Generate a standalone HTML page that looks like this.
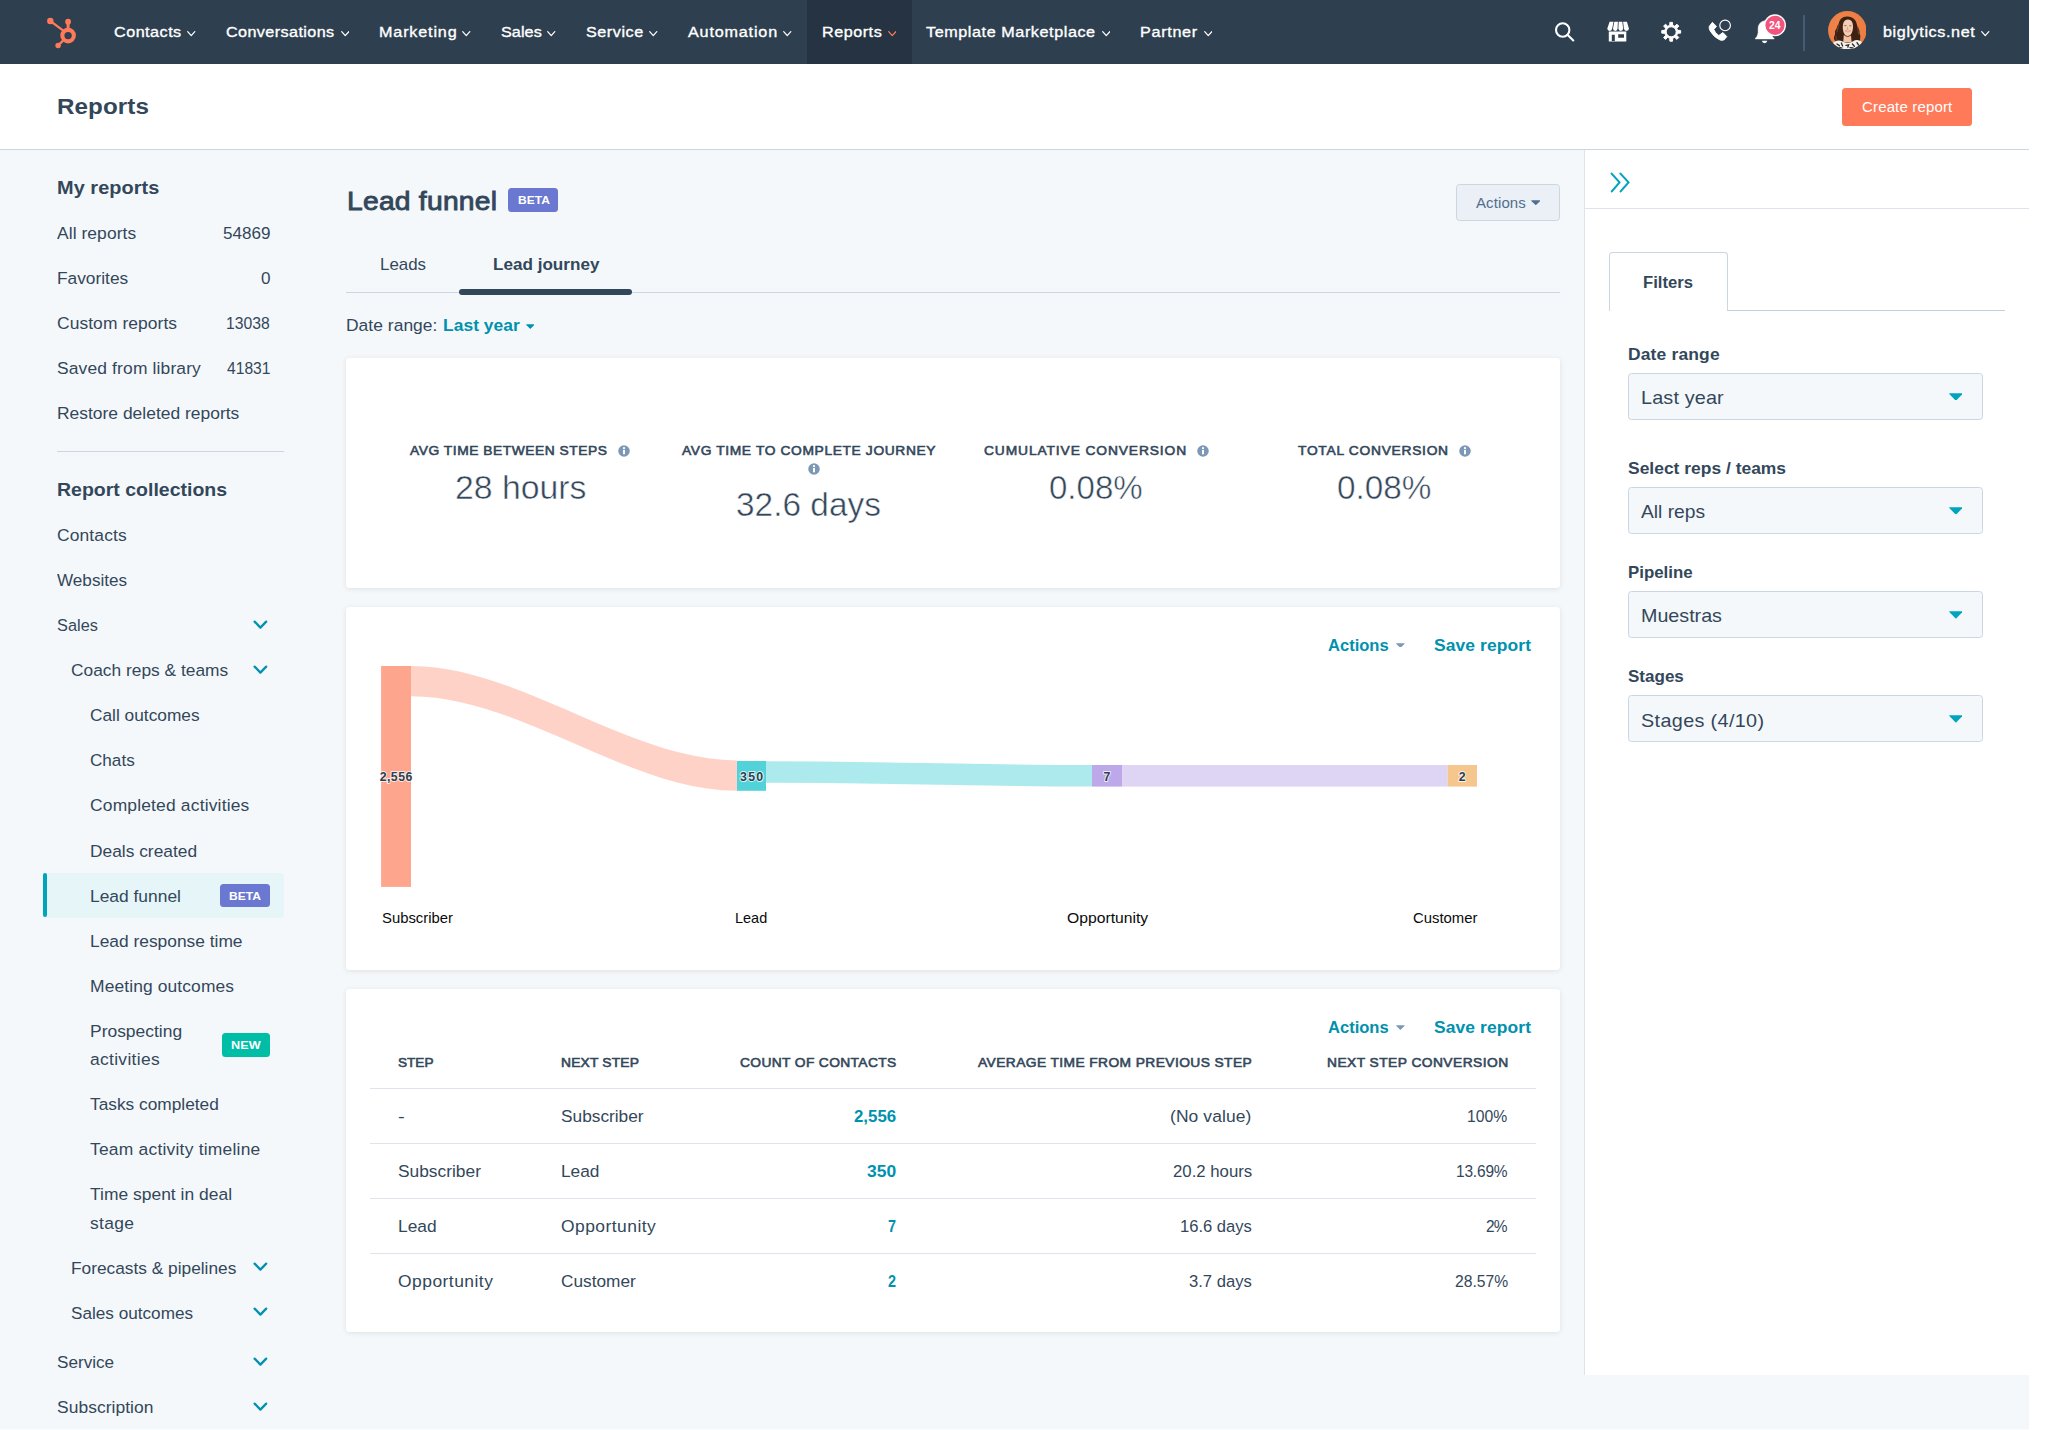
<!DOCTYPE html>
<html lang="en">
<head>
<meta charset="utf-8">
<title>Reports | Lead funnel</title>
<style>
html,body{margin:0;padding:0;background:#fff}
body{width:2048px;height:1430px;overflow:hidden;position:relative;font-family:"Liberation Sans",sans-serif;color:#33475b}
#app{position:absolute;left:0;top:0;width:2029px;height:1430px;background:#f5f8fa;overflow:hidden}
.b{position:absolute;display:block}
.t{position:absolute;display:block;white-space:pre;line-height:1;font-weight:400;transform-origin:0 0}
nav .t,nav .b{}
</style>
</head>
<body>
<div id="app">
<nav class="b" style="left:0;top:0;width:2029px;height:64px;background:#2e3f50">
<div class="b" style="left:807.00px;top:0.00px;width:105.00px;height:64.00px;background:#253342;"></div>
<svg class="b" style="left:46px;top:17px" width="34" height="33" viewBox="0 0 34 33"><g fill="none" stroke="#ff7a59" stroke-linecap="round"><path d="M4.3 4.0 L17.6 13.8" stroke-width="2.2"/><path d="M22.1 4.8 V11.5" stroke-width="3"/><path d="M12.1 28.4 L17.6 23.2" stroke-width="2.4"/><circle cx="22.1" cy="18.6" r="5.75" stroke-width="4.1"/></g><g fill="#ff7a59"><circle cx="4.3" cy="4.0" r="3.2"/><circle cx="22.1" cy="4.7" r="2.9"/><circle cx="12.1" cy="28.4" r="2.75"/></g></svg>
<span class="t" style="left:113.60px;top:23px;font-size:15.10px;line-height:17px;letter-spacing:0.462px;transform:scaleX(1.0700);color:#fff;-webkit-text-stroke:0.35px currentColor;">Contacts</span>
<svg class="b" style="left:187.00px;top:31.20px" width="8.50" height="5.40" viewBox="0 0 8.50 5.40"><path d="M0.7 0.7 L4.25 4.60 L7.80 0.7" fill="none" stroke="#fff" stroke-width="1.25" stroke-linecap="round" stroke-linejoin="round"/></svg>
<span class="t" style="left:225.60px;top:23px;font-size:15.10px;line-height:17px;letter-spacing:0.386px;transform:scaleX(1.0700);color:#fff;-webkit-text-stroke:0.35px currentColor;">Conversations</span>
<svg class="b" style="left:340.50px;top:31.20px" width="8.50" height="5.40" viewBox="0 0 8.50 5.40"><path d="M0.7 0.7 L4.25 4.60 L7.80 0.7" fill="none" stroke="#fff" stroke-width="1.25" stroke-linecap="round" stroke-linejoin="round"/></svg>
<span class="t" style="left:378.60px;top:23px;font-size:15.10px;line-height:17px;letter-spacing:0.791px;transform:scaleX(1.0700);color:#fff;-webkit-text-stroke:0.35px currentColor;">Marketing</span>
<svg class="b" style="left:462.30px;top:31.20px" width="8.50" height="5.40" viewBox="0 0 8.50 5.40"><path d="M0.7 0.7 L4.25 4.60 L7.80 0.7" fill="none" stroke="#fff" stroke-width="1.25" stroke-linecap="round" stroke-linejoin="round"/></svg>
<span class="t" style="left:500.60px;top:23px;font-size:15.10px;line-height:17px;letter-spacing:0.072px;transform:scaleX(1.0700);color:#fff;-webkit-text-stroke:0.35px currentColor;">Sales</span>
<svg class="b" style="left:547.30px;top:31.20px" width="8.50" height="5.40" viewBox="0 0 8.50 5.40"><path d="M0.7 0.7 L4.25 4.60 L7.80 0.7" fill="none" stroke="#fff" stroke-width="1.25" stroke-linecap="round" stroke-linejoin="round"/></svg>
<span class="t" style="left:585.60px;top:23px;font-size:15.10px;line-height:17px;letter-spacing:0.517px;transform:scaleX(1.0700);color:#fff;-webkit-text-stroke:0.35px currentColor;">Service</span>
<svg class="b" style="left:649.00px;top:31.20px" width="8.50" height="5.40" viewBox="0 0 8.50 5.40"><path d="M0.7 0.7 L4.25 4.60 L7.80 0.7" fill="none" stroke="#fff" stroke-width="1.25" stroke-linecap="round" stroke-linejoin="round"/></svg>
<span class="t" style="left:687.60px;top:23px;font-size:15.10px;line-height:17px;letter-spacing:0.773px;transform:scaleX(1.0700);color:#fff;-webkit-text-stroke:0.35px currentColor;">Automation</span>
<svg class="b" style="left:783.00px;top:31.20px" width="8.50" height="5.40" viewBox="0 0 8.50 5.40"><path d="M0.7 0.7 L4.25 4.60 L7.80 0.7" fill="none" stroke="#fff" stroke-width="1.25" stroke-linecap="round" stroke-linejoin="round"/></svg>
<span class="t" style="left:821.60px;top:23px;font-size:15.10px;line-height:17px;letter-spacing:0.491px;transform:scaleX(1.0700);color:#fff;-webkit-text-stroke:0.35px currentColor;">Reports</span>
<svg class="b" style="left:887.50px;top:31.20px" width="8.50" height="5.40" viewBox="0 0 8.50 5.40"><path d="M0.7 0.7 L4.25 4.60 L7.80 0.7" fill="none" stroke="#ff7a59" stroke-width="1.25" stroke-linecap="round" stroke-linejoin="round"/></svg>
<span class="t" style="left:925.60px;top:23px;font-size:15.10px;line-height:17px;letter-spacing:0.546px;transform:scaleX(1.0700);color:#fff;-webkit-text-stroke:0.35px currentColor;">Template Marketplace</span>
<svg class="b" style="left:1101.50px;top:31.20px" width="8.50" height="5.40" viewBox="0 0 8.50 5.40"><path d="M0.7 0.7 L4.25 4.60 L7.80 0.7" fill="none" stroke="#fff" stroke-width="1.25" stroke-linecap="round" stroke-linejoin="round"/></svg>
<span class="t" style="left:1139.60px;top:23px;font-size:15.10px;line-height:17px;letter-spacing:0.655px;transform:scaleX(1.0700);color:#fff;-webkit-text-stroke:0.35px currentColor;">Partner</span>
<svg class="b" style="left:1203.50px;top:31.20px" width="8.50" height="5.40" viewBox="0 0 8.50 5.40"><path d="M0.7 0.7 L4.25 4.60 L7.80 0.7" fill="none" stroke="#fff" stroke-width="1.25" stroke-linecap="round" stroke-linejoin="round"/></svg>
<svg class="b" style="left:1553px;top:20px" width="24" height="24" viewBox="0 0 24 24"><g fill="none" stroke="#fff" stroke-width="2.1" stroke-linecap="round"><circle cx="9.7" cy="10" r="6.7"/><path d="M14.7 15 L20.3 20.4"/></g></svg>
<svg class="b" style="left:1606px;top:21px" width="25" height="22" viewBox="0 0 25 22"><g fill="#fff"><path d="M3.6 0.7 H7.5 L6.2 7.6 Q6.0 9.9 3.8 9.9 Q1.3 9.8 1.3 7.6 Z"/><path d="M8.3 0.7 H11.9 L11.6 7.6 Q11.5 9.9 9.3 9.9 Q7.0 9.8 7.0 7.6 Z"/><path d="M12.7 0.7 H16.3 L17.1 7.6 Q17.1 9.9 14.8 9.9 Q12.5 9.8 12.4 7.6 Z"/><path d="M17.1 0.7 H20.9 L22.9 7.6 Q22.9 9.9 20.4 9.9 Q18.2 9.8 17.9 7.6 Z"/><path d="M2.8 10.4 H20.3 V20.6 H2.8 Z M5.8 13.7 V19.9 H8.8 V13.7 Z M12.2 13.3 V16.8 H18.0 V13.3 Z" fill-rule="evenodd"/></g></svg>
<svg class="b" style="left:1659px;top:20px" width="24" height="24" viewBox="0 0 24 24"><path d="M10.76 5.36 L10.87 2.39 L13.53 2.39 L13.64 5.36 L15.74 6.23 L17.91 4.21 L19.79 6.09 L17.77 8.26 L18.64 10.36 L21.61 10.47 L21.61 13.13 L18.64 13.24 L17.77 15.34 L19.79 17.51 L17.91 19.39 L15.74 17.37 L13.64 18.24 L13.53 21.21 L10.87 21.21 L10.76 18.24 L8.66 17.37 L6.49 19.39 L4.61 17.51 L6.63 15.34 L5.76 13.24 L2.79 13.13 L2.79 10.47 L5.76 10.36 L6.63 8.26 L4.61 6.09 L6.49 4.21 L8.66 6.23 Z M7.20 11.80 a5.00 5.00 0 1 0 10.00 0 a5.00 5.00 0 1 0 -10.00 0 Z" fill="#fff" fill-rule="evenodd" stroke="#fff" stroke-width="1" stroke-linejoin="round"/></svg>
<svg class="b" style="left:1707px;top:18px" width="26" height="25" viewBox="0 0 26 25"><path d="M5.4 4.3 L9.5 8.4 L6.8 11.5 Q8.1 15 11.8 17.5 L15.9 14.5 L19.8 18.6 L17.3 21.7 Q15.4 22.8 13.2 22.1 Q7 19.4 3.1 12.9 Q1.6 10 2.3 8.3 Z" fill="#fff" stroke="#fff" stroke-width="0.9" stroke-linejoin="round"/><circle cx="18.1" cy="7.4" r="5.3" fill="#2e3f50" stroke="#fff" stroke-width="1.15"/></svg>
<svg class="b" style="left:1753px;top:12px" width="36" height="34" viewBox="0 0 36 34"><path d="M2.1 26.9 Q4.8 24.2 5.1 21 V16.6 Q5.3 10 11.7 8.7 Q18.1 10 18.3 16.6 V21 Q18.6 24.2 21.3 26.9 Z" fill="#fff" stroke="#fff" stroke-width=".5" stroke-linejoin="round"/><path d="M8.9 28.8 H14.3 Q13.8 31.2 11.6 31.2 Q9.4 31.2 8.9 28.8 Z" fill="#fff"/><circle cx="22.0" cy="13.3" r="11.0" fill="#fff"/><circle cx="22.0" cy="13.3" r="9.6" fill="#f2547d"/></svg>
<span class="t" style="left:1768.60px;top:19px;font-size:10.70px;line-height:12px;transform:scaleX(0.9598);font-weight:700;color:#fff;">24</span>
<div class="b" style="left:1803.00px;top:15.00px;width:2.00px;height:36.00px;background:#425b76;"></div>
<svg class="b" style="left:1827.8px;top:10.5px" width="38.6" height="38.6" viewBox="0 0 38.6 38.6"><defs><clipPath id="av"><circle cx="19.3" cy="19.3" r="19.2"/></clipPath><radialGradient id="avg" cx=".4" cy=".45" r=".7"><stop offset="0" stop-color="#f08850"/><stop offset="1" stop-color="#ec7a3e"/></radialGradient></defs><g clip-path="url(#av)"><rect width="38.6" height="38.6" fill="url(#avg)"/><path d="M19.6 5.6 C14.2 5.4 11.6 8.6 10.8 12.4 C8.8 14.6 9.2 17.0 8.0 18.6 C5.8 20.6 8.0 22.8 6.6 24.6 C5.0 27.4 6.4 30.0 9.0 31.2 L17 33 L27.5 33.5 C30.6 33.2 32.8 30.6 32.0 27.6 C33.4 25.0 31.0 23.2 31.6 20.6 C31.4 17.8 29.4 16.6 29.0 14.0 C28.4 9.2 25.0 5.8 19.6 5.6 Z" fill="#3f2114"/><path d="M11.2 13 C9.4 16 10.4 19 8.6 21.4 M29.6 16 C30.6 19 29.6 21 31 23.4 M8.2 25 C7.4 27.6 9 29.4 10.6 30.4" stroke="#70422a" stroke-width="1.1" fill="none"/><path d="M15.8 24 H23.0 L23.6 31.5 H15.2 Z" fill="#f1c3a4"/><path d="M19.9 8.6 C23.4 8.6 25.2 11.6 25.0 16.2 C24.8 20.8 22.8 25.4 19.8 25.4 C16.8 25.4 14.8 20.8 14.8 16.2 C14.8 11.4 16.6 8.6 19.9 8.6 Z" fill="#f6cdb0"/><path d="M16.2 24.2 Q19.8 27.0 23.2 24.2" stroke="#5a3220" stroke-width=".9" fill="none"/><path d="M17.0 19.6 Q19.8 22.6 22.8 19.8 Q19.8 20.8 17.0 19.6 Z" fill="#fff" stroke="#c9756a" stroke-width=".5"/><path d="M16.4 14.6 h2 M21.4 14.8 h2" stroke="#6a5a56" stroke-width=".9"/><path d="M19.6 16 L19.2 18.4 L20.4 18.4" stroke="#c98e72" stroke-width=".6" fill="none"/><path d="M4 38.6 L5.4 31.4 Q9.6 28.4 14.6 30.4 Q19.6 33.4 24.6 30.4 Q29.6 27.6 33.4 30.6 L35.6 38.6 Z" fill="#f4f1ec"/><path d="M9 33 l2.4 1.6 M13.4 32 l1.2 3 M18 34.4 l2.6 -.6 l-.8 2.4 M24.4 33 l2 2.2 M29 31.6 l1.6 2.6 M11 36.4 l3 .8 M22 36.6 l3 .4 M30.4 35.8 l1.6 1.2" stroke="#2a2a2a" stroke-width="1.3" fill="none" stroke-linecap="round"/></g></svg>
<span class="t" style="left:1883.10px;top:23px;font-size:15.10px;line-height:17px;letter-spacing:0.575px;transform:scaleX(1.0700);color:#fff;-webkit-text-stroke:0.35px currentColor;">biglytics.net</span>
<svg class="b" style="left:1981.20px;top:31.20px" width="8.50" height="5.40" viewBox="0 0 8.50 5.40"><path d="M0.7 0.7 L4.25 4.60 L7.80 0.7" fill="none" stroke="#fff" stroke-width="1.25" stroke-linecap="round" stroke-linejoin="round"/></svg>
</nav>
<header class="b" style="left:0;top:64px;width:2029px;height:85px;background:#fff;border-bottom:1px solid #cbd6e2">
</header>
<span class="t" style="left:57.30px;top:94px;font-size:22.60px;line-height:25px;letter-spacing:0.092px;transform:scaleX(1.0700);font-weight:700;">Reports</span>
<div class="b" style="left:1842.00px;top:88.00px;width:130.00px;height:37.60px;background:#ff7a59;border-radius:3.5px"></div>
<span class="t" style="left:1862.10px;top:99px;font-size:14.00px;line-height:16px;letter-spacing:0.153px;transform:scaleX(1.0700);color:#fff;">Create report</span>
<aside>
<span class="t" style="left:57.10px;top:177px;font-size:18.60px;line-height:21px;letter-spacing:0.052px;transform:scaleX(1.0700);font-weight:700;">My reports</span>
<span class="t" style="left:57.10px;top:224px;font-size:16.30px;line-height:18px;letter-spacing:0.067px;transform:scaleX(1.0700);">All reports</span>
<span class="t" style="left:222.50px;top:224px;font-size:16.30px;line-height:18px;transform:scaleX(1.0482);">54869</span>
<span class="t" style="left:57.10px;top:269px;font-size:16.30px;line-height:18px;transform:scaleX(1.0628);">Favorites</span>
<span class="t" style="left:260.50px;top:269px;font-size:16.30px;line-height:18px;transform:scaleX(1.0501);">0</span>
<span class="t" style="left:57.10px;top:314px;font-size:16.30px;line-height:18px;letter-spacing:0.071px;transform:scaleX(1.0700);">Custom reports</span>
<span class="t" style="left:226.30px;top:314px;font-size:16.30px;line-height:18px;transform:scaleX(0.9644);">13038</span>
<span class="t" style="left:57.10px;top:359px;font-size:16.30px;line-height:18px;letter-spacing:0.136px;transform:scaleX(1.0700);">Saved from library</span>
<span class="t" style="left:226.50px;top:359px;font-size:16.30px;line-height:18px;transform:scaleX(0.9600);">41831</span>
<span class="t" style="left:57.10px;top:404px;font-size:16.30px;line-height:18px;letter-spacing:0.010px;transform:scaleX(1.0700);">Restore deleted reports</span>
<div class="b" style="left:57.00px;top:451.00px;width:226.70px;height:1.00px;background:#cbd6e2;"></div>
<span class="t" style="left:57.10px;top:479px;font-size:18.60px;line-height:21px;transform:scaleX(1.0488);font-weight:700;">Report collections</span>
<span class="t" style="left:57.10px;top:526px;font-size:16.30px;line-height:18px;letter-spacing:0.120px;transform:scaleX(1.0700);">Contacts</span>
<span class="t" style="left:57.10px;top:571px;font-size:16.30px;line-height:18px;transform:scaleX(1.0517);">Websites</span>
<span class="t" style="left:57.10px;top:616px;font-size:16.30px;line-height:18px;">Sales</span>
<svg class="b" style="left:252.9px;top:619.90px" width="16" height="10" viewBox="0 0 16 10"><path d="M1.6 1.6 L7.4 7.6 L13.2 1.6" fill="none" stroke="#0091ae" stroke-width="2.25" stroke-linecap="round" stroke-linejoin="round"/></svg>
<span class="t" style="left:70.90px;top:661px;font-size:16.30px;line-height:18px;transform:scaleX(1.0658);">Coach reps &amp; teams</span>
<svg class="b" style="left:252.9px;top:664.90px" width="16" height="10" viewBox="0 0 16 10"><path d="M1.6 1.6 L7.4 7.6 L13.2 1.6" fill="none" stroke="#0091ae" stroke-width="2.25" stroke-linecap="round" stroke-linejoin="round"/></svg>
<span class="t" style="left:90.10px;top:706px;font-size:16.30px;line-height:18px;transform:scaleX(1.0624);">Call outcomes</span>
<span class="t" style="left:90.10px;top:751px;font-size:16.30px;line-height:18px;transform:scaleX(1.0507);">Chats</span>
<span class="t" style="left:90.10px;top:796px;font-size:16.30px;line-height:18px;letter-spacing:0.167px;transform:scaleX(1.0700);">Completed activities</span>
<span class="t" style="left:90.10px;top:842px;font-size:16.30px;line-height:18px;transform:scaleX(1.0659);">Deals created</span>
<div class="b" style="left:42.50px;top:872.50px;width:241.20px;height:45.00px;background:#e5f5f8;border-radius:3.5px"></div>
<div class="b" style="left:42.60px;top:872.60px;width:4.50px;height:44.90px;background:#00a4bd;border-radius:2.3px"></div>
<span class="t" style="left:90.10px;top:887px;font-size:16.30px;line-height:18px;transform:scaleX(1.0685);">Lead funnel</span>
<div class="b" style="left:219.50px;top:884.00px;width:50.00px;height:22.80px;background:#6a78d1;border-radius:3.5px"></div>
<span class="t" style="left:228.60px;top:889px;font-size:11.80px;line-height:14px;transform:scaleX(1.0201);font-weight:700;color:#fff;">BETA</span>
<span class="t" style="left:90.10px;top:932px;font-size:16.30px;line-height:18px;transform:scaleX(1.0664);">Lead response time</span>
<span class="t" style="left:90.10px;top:977px;font-size:16.30px;line-height:18px;letter-spacing:0.106px;transform:scaleX(1.0700);">Meeting outcomes</span>
<span>
<span class="t" style="left:90.10px;top:1022px;font-size:16.30px;line-height:18px;letter-spacing:0.010px;transform:scaleX(1.0700);">Prospecting</span>
<span class="t" style="left:90.10px;top:1050px;font-size:16.30px;line-height:18px;letter-spacing:0.292px;transform:scaleX(1.0700);">activities</span>
</span>
<span class="t" style="left:90.10px;top:1095px;font-size:16.30px;line-height:18px;transform:scaleX(1.0623);">Tasks completed</span>
<span class="t" style="left:90.10px;top:1140px;font-size:16.30px;line-height:18px;letter-spacing:0.210px;transform:scaleX(1.0700);">Team activity timeline</span>
<span>
<span class="t" style="left:90.10px;top:1185px;font-size:16.30px;line-height:18px;letter-spacing:0.017px;transform:scaleX(1.0700);">Time spent in deal</span>
<span class="t" style="left:90.10px;top:1214px;font-size:16.30px;line-height:18px;letter-spacing:0.317px;transform:scaleX(1.0700);">stage</span>
</span>
<span class="t" style="left:71.10px;top:1259px;font-size:16.30px;line-height:18px;transform:scaleX(1.0621);">Forecasts &amp; pipelines</span>
<svg class="b" style="left:252.9px;top:1262.20px" width="16" height="10" viewBox="0 0 16 10"><path d="M1.6 1.6 L7.4 7.6 L13.2 1.6" fill="none" stroke="#0091ae" stroke-width="2.25" stroke-linecap="round" stroke-linejoin="round"/></svg>
<span class="t" style="left:71.10px;top:1304px;font-size:16.30px;line-height:18px;transform:scaleX(1.0537);">Sales outcomes</span>
<svg class="b" style="left:252.9px;top:1307.30px" width="16" height="10" viewBox="0 0 16 10"><path d="M1.6 1.6 L7.4 7.6 L13.2 1.6" fill="none" stroke="#0091ae" stroke-width="2.25" stroke-linecap="round" stroke-linejoin="round"/></svg>
<span class="t" style="left:57.10px;top:1353px;font-size:16.30px;line-height:18px;transform:scaleX(1.0522);">Service</span>
<svg class="b" style="left:252.9px;top:1356.80px" width="16" height="10" viewBox="0 0 16 10"><path d="M1.6 1.6 L7.4 7.6 L13.2 1.6" fill="none" stroke="#0091ae" stroke-width="2.25" stroke-linecap="round" stroke-linejoin="round"/></svg>
<span class="t" style="left:57.10px;top:1398px;font-size:16.30px;line-height:18px;letter-spacing:0.041px;transform:scaleX(1.0700);">Subscription</span>
<svg class="b" style="left:252.9px;top:1401.80px" width="16" height="10" viewBox="0 0 16 10"><path d="M1.6 1.6 L7.4 7.6 L13.2 1.6" fill="none" stroke="#0091ae" stroke-width="2.25" stroke-linecap="round" stroke-linejoin="round"/></svg>
<div class="b" style="left:221.80px;top:1033.00px;width:48.40px;height:23.50px;background:#00bda5;border-radius:3.5px"></div>
<span class="t" style="left:230.90px;top:1038px;font-size:11.80px;line-height:14px;letter-spacing:0.055px;transform:scaleX(1.0700);font-weight:700;color:#fff;">NEW</span>
<div class="b" style="left:0.00px;top:1429.00px;width:2029.00px;height:1.00px;background:#fafcfd;"></div>
</aside>
<main>
<span class="t" style="left:346.60px;top:186px;font-size:26.40px;line-height:30px;letter-spacing:0.225px;transform:scaleX(1.0700);-webkit-text-stroke:0.9px currentColor;">Lead funnel</span>
<div class="b" style="left:508.20px;top:188.00px;width:50.20px;height:23.80px;background:#6a78d1;border-radius:3.5px"></div>
<span class="t" style="left:517.50px;top:193px;font-size:11.80px;line-height:14px;transform:scaleX(1.0201);font-weight:700;color:#fff;">BETA</span>
<div class="b" style="left:1456.00px;top:184.00px;width:104.00px;height:37.00px;background:#eaf0f6;border:1px solid #cbd6e2;border-radius:3.5px;box-sizing:border-box"></div>
<span class="t" style="left:1476.10px;top:195px;font-size:14.00px;line-height:16px;letter-spacing:0.104px;transform:scaleX(1.0700);color:#506e91;">Actions</span>
<svg class="b" style="left:1530.80px;top:200.40px" width="9.60" height="5.00" viewBox="0 0 9.60 5.00"><path d="M0.6 0.3 H9.00 Q9.60 0.3 9.30 1 L5.30 4.70 Q4.80 5.20 4.30 4.70 L0.3 1 Q0 0.3 0.6 0.3 Z" fill="#506e91"/></svg>
<div class="b" style="left:346.00px;top:292.00px;width:1214.00px;height:1.00px;background:#cbd6e2;"></div>
<span class="t" style="left:379.60px;top:255px;font-size:16.60px;line-height:19px;transform:scaleX(1.0169);">Leads</span>
<span class="t" style="left:492.60px;top:255px;font-size:16.60px;line-height:19px;transform:scaleX(1.0306);font-weight:700;">Lead journey</span>
<div class="b" style="left:458.80px;top:289.00px;width:173.20px;height:6.00px;background:#33475b;border-radius:3px"></div>
<span class="t" style="left:346.30px;top:316px;font-size:16.30px;line-height:18px;letter-spacing:0.035px;transform:scaleX(1.0700);">Date range:</span>
<span class="t" style="left:442.90px;top:316px;font-size:16.30px;line-height:18px;letter-spacing:0.039px;transform:scaleX(1.0700);font-weight:700;color:#0091ae;">Last year</span>
<svg class="b" style="left:525.80px;top:324.30px" width="8.60" height="4.70" viewBox="0 0 8.60 4.70"><path d="M0.6 0.3 H8.00 Q8.60 0.3 8.30 1 L4.80 4.40 Q4.30 4.90 3.80 4.40 L0.3 1 Q0 0.3 0.6 0.3 Z" fill="#0091ae"/></svg>
<div class="b" style="left:346.00px;top:357.50px;width:1213.50px;height:230.00px;background:#fff;border-radius:3.5px;box-shadow:0 1px 5px rgba(45,62,80,.12)"></div>
<span class="t" style="left:410.10px;top:443px;font-size:13.40px;line-height:15px;letter-spacing:0.516px;transform:scaleX(1.0300);-webkit-text-stroke:0.6px currentColor;">AVG TIME BETWEEN STEPS</span>
<svg class="b" style="left:617.80px;top:444.80px" width="12" height="12" viewBox="0 0 12 12"><circle cx="6" cy="6" r="5.75" fill="#7c98b6"/><rect x="5.0" y="5.0" width="2.0" height="4.3" fill="#fff"/><circle cx="6" cy="3.2" r="1.15" fill="#fff"/></svg>
<span class="t" style="left:454.60px;top:469px;font-size:33.20px;line-height:37px;transform:scaleX(1.0182);color:#33475b;-webkit-text-stroke:0.5px #fff;">28 hours</span>
<span class="t" style="left:681.60px;top:443px;font-size:13.40px;line-height:15px;letter-spacing:0.611px;transform:scaleX(1.0300);-webkit-text-stroke:0.6px currentColor;">AVG TIME TO COMPLETE JOURNEY</span>
<svg class="b" style="left:807.60px;top:462.80px" width="12" height="12" viewBox="0 0 12 12"><circle cx="6" cy="6" r="5.75" fill="#7c98b6"/><rect x="5.0" y="5.0" width="2.0" height="4.3" fill="#fff"/><circle cx="6" cy="3.2" r="1.15" fill="#fff"/></svg>
<span class="t" style="left:735.90px;top:486px;font-size:33.20px;line-height:37px;transform:scaleX(1.0068);color:#33475b;-webkit-text-stroke:0.5px #fff;">32.6 days</span>
<span class="t" style="left:983.60px;top:443px;font-size:13.40px;line-height:15px;letter-spacing:0.858px;transform:scaleX(1.0300);-webkit-text-stroke:0.6px currentColor;">CUMULATIVE CONVERSION</span>
<svg class="b" style="left:1197.00px;top:444.80px" width="12" height="12" viewBox="0 0 12 12"><circle cx="6" cy="6" r="5.75" fill="#7c98b6"/><rect x="5.0" y="5.0" width="2.0" height="4.3" fill="#fff"/><circle cx="6" cy="3.2" r="1.15" fill="#fff"/></svg>
<span class="t" style="left:1049.10px;top:469px;font-size:33.20px;line-height:37px;transform:scaleX(0.9955);color:#33475b;-webkit-text-stroke:0.5px #fff;">0.08%</span>
<span class="t" style="left:1297.60px;top:443px;font-size:13.40px;line-height:15px;letter-spacing:0.703px;transform:scaleX(1.0300);-webkit-text-stroke:0.6px currentColor;">TOTAL CONVERSION</span>
<svg class="b" style="left:1459.20px;top:444.80px" width="12" height="12" viewBox="0 0 12 12"><circle cx="6" cy="6" r="5.75" fill="#7c98b6"/><rect x="5.0" y="5.0" width="2.0" height="4.3" fill="#fff"/><circle cx="6" cy="3.2" r="1.15" fill="#fff"/></svg>
<span class="t" style="left:1337.10px;top:469px;font-size:33.20px;line-height:37px;transform:scaleX(1.0040);color:#33475b;-webkit-text-stroke:0.5px #fff;">0.08%</span>
<div class="b" style="left:346.00px;top:606.50px;width:1213.50px;height:363.00px;background:#fff;border-radius:3.5px;box-shadow:0 1px 5px rgba(45,62,80,.12)"></div>
<span class="t" style="left:1328.40px;top:636px;font-size:16.30px;line-height:18px;transform:scaleX(1.0161);font-weight:700;color:#0091ae;">Actions</span>
<svg class="b" style="left:1395.80px;top:642.80px" width="8.80" height="4.70" viewBox="0 0 8.80 4.70"><path d="M0.6 0.3 H8.20 Q8.80 0.3 8.50 1 L4.90 4.40 Q4.40 4.90 3.90 4.40 L0.3 1 Q0 0.3 0.6 0.3 Z" fill="#7c98b6"/></svg>
<span class="t" style="left:1433.80px;top:636px;font-size:16.30px;line-height:18px;letter-spacing:0.111px;transform:scaleX(1.0700);font-weight:700;color:#0091ae;">Save report</span>
<svg class="b" style="left:346px;top:606px" width="1214" height="364" viewBox="346 606 1214 364">
<path d="M411 666 C519.7 666 628.3 760.4 737 760.4 L737 790.8 C628.3 790.8 519.7 696.2 411 696.2 Z" fill="#fea58e" fill-opacity=".5"/>
<path d="M766 761.2 C874.7 761.2 983.3 765 1092 765 L1092 786.6 C983.3 786.6 874.7 782.8 766 782.8 Z" fill="#51d3d9" fill-opacity=".47"/>
<rect x="1122" y="765" width="325.6" height="21.6" fill="#bda9ea" fill-opacity=".5"/>
<rect x="381.1" y="666" width="29.9" height="220.9" fill="#fea58e"/>
<rect x="737" y="761" width="29" height="29.8" fill="#51d3d9"/>
<rect x="1092" y="765" width="30" height="21.6" fill="#bda9ea"/>
<rect x="1447.6" y="765" width="29.4" height="21.6" fill="#f5c78e"/>
<g font-family="Liberation Sans, sans-serif" font-weight="700" font-size="12.3" fill="#2d3e50" text-anchor="middle" stroke="#fff" stroke-opacity=".75" stroke-width="2" paint-order="stroke" stroke-linejoin="round">
<text x="396" y="781.2" textLength="32.5" lengthAdjust="spacing">2,556</text>
<text x="751.6" y="781.2" textLength="23" lengthAdjust="spacing">350</text>
<text x="1107" y="781.2">7</text>
<text x="1462.2" y="781.2">2</text>
</g>
</svg>
<span class="t" style="left:381.60px;top:909px;font-size:15.00px;line-height:17px;transform:scaleX(0.9902);color:#0a0a0a;">Subscriber</span>
<span class="t" style="left:735.40px;top:909px;font-size:15.00px;line-height:17px;transform:scaleX(0.9648);color:#0a0a0a;">Lead</span>
<span class="t" style="left:1066.60px;top:909px;font-size:15.00px;line-height:17px;transform:scaleX(1.0471);color:#0a0a0a;">Opportunity</span>
<span class="t" style="left:1413.00px;top:909px;font-size:15.00px;line-height:17px;transform:scaleX(0.9919);color:#0a0a0a;">Customer</span>
<div class="b" style="left:346.00px;top:989.00px;width:1213.50px;height:343.00px;background:#fff;border-radius:3.5px;box-shadow:0 1px 5px rgba(45,62,80,.12)"></div>
<span class="t" style="left:1328.40px;top:1018px;font-size:16.30px;line-height:18px;transform:scaleX(1.0161);font-weight:700;color:#0091ae;">Actions</span>
<svg class="b" style="left:1395.80px;top:1024.90px" width="8.80" height="4.70" viewBox="0 0 8.80 4.70"><path d="M0.6 0.3 H8.20 Q8.80 0.3 8.50 1 L4.90 4.40 Q4.40 4.90 3.90 4.40 L0.3 1 Q0 0.3 0.6 0.3 Z" fill="#7c98b6"/></svg>
<span class="t" style="left:1433.80px;top:1018px;font-size:16.30px;line-height:18px;letter-spacing:0.111px;transform:scaleX(1.0700);font-weight:700;color:#0091ae;">Save report</span>
<span class="t" style="left:397.90px;top:1055px;font-size:13.40px;line-height:15px;transform:scaleX(1.0150);-webkit-text-stroke:0.6px currentColor;">STEP</span>
<span class="t" style="left:561.00px;top:1055px;font-size:13.40px;line-height:15px;letter-spacing:0.187px;transform:scaleX(1.0300);-webkit-text-stroke:0.6px currentColor;">NEXT STEP</span>
<span class="t" style="left:740.10px;top:1055px;font-size:13.40px;line-height:15px;letter-spacing:0.351px;transform:scaleX(1.0300);-webkit-text-stroke:0.6px currentColor;">COUNT OF CONTACTS</span>
<span class="t" style="left:977.90px;top:1055px;font-size:13.40px;line-height:15px;letter-spacing:0.393px;transform:scaleX(1.0300);-webkit-text-stroke:0.6px currentColor;">AVERAGE TIME FROM PREVIOUS STEP</span>
<span class="t" style="left:1326.50px;top:1055px;font-size:13.40px;line-height:15px;letter-spacing:0.429px;transform:scaleX(1.0300);-webkit-text-stroke:0.6px currentColor;">NEXT STEP CONVERSION</span>
<div class="b" style="left:369.60px;top:1088.30px;width:1166.60px;height:1.20px;background:#dfe3eb;"></div>
<div class="b" style="left:369.60px;top:1143.00px;width:1166.60px;height:1.20px;background:#dfe3eb;"></div>
<div class="b" style="left:369.60px;top:1198.10px;width:1166.60px;height:1.20px;background:#dfe3eb;"></div>
<div class="b" style="left:369.60px;top:1253.20px;width:1166.60px;height:1.20px;background:#dfe3eb;"></div>
<span class="t" style="left:398.10px;top:1107px;font-size:16.30px;line-height:18px;transform:scaleX(1.2270);">-</span>
<span class="t" style="left:561.20px;top:1107px;font-size:16.30px;line-height:18px;transform:scaleX(1.0614);">Subscriber</span>
<span class="t" style="left:854.20px;top:1107px;font-size:16.30px;line-height:18px;transform:scaleX(1.0335);font-weight:700;color:#0091ae;">2,556</span>
<span class="t" style="left:1170.30px;top:1107px;font-size:16.30px;line-height:18px;letter-spacing:0.105px;transform:scaleX(1.0700);">(No value)</span>
<span class="t" style="left:1467.40px;top:1107px;font-size:16.30px;line-height:18px;transform:scaleX(0.9658);">100%</span>
<span class="t" style="left:398.10px;top:1162px;font-size:16.30px;line-height:18px;transform:scaleX(1.0653);">Subscriber</span>
<span class="t" style="left:561.20px;top:1162px;font-size:16.30px;line-height:18px;transform:scaleX(1.0616);">Lead</span>
<span class="t" style="left:867.10px;top:1162px;font-size:16.30px;line-height:18px;letter-spacing:0.081px;transform:scaleX(1.0700);font-weight:700;color:#0091ae;">350</span>
<span class="t" style="left:1172.50px;top:1162px;font-size:16.30px;line-height:18px;transform:scaleX(1.0296);">20.2 hours</span>
<span class="t" style="left:1456.10px;top:1162px;font-size:16.30px;line-height:18px;letter-spacing:-0.188px;transform:scaleX(0.9500);">13.69%</span>
<span class="t" style="left:398.10px;top:1217px;font-size:16.30px;line-height:18px;transform:scaleX(1.0643);">Lead</span>
<span class="t" style="left:561.20px;top:1217px;font-size:16.30px;line-height:18px;letter-spacing:0.442px;transform:scaleX(1.0700);">Opportunity</span>
<span class="t" style="left:888.40px;top:1217px;font-size:16.30px;line-height:18px;transform:scaleX(0.8843);font-weight:700;color:#0091ae;">7</span>
<span class="t" style="left:1179.90px;top:1217px;font-size:16.30px;line-height:18px;transform:scaleX(1.0175);">16.6 days</span>
<span class="t" style="left:1486.10px;top:1217px;font-size:16.30px;line-height:18px;letter-spacing:-0.817px;transform:scaleX(0.9500);">2%</span>
<span class="t" style="left:398.10px;top:1272px;font-size:16.30px;line-height:18px;letter-spacing:0.451px;transform:scaleX(1.0700);">Opportunity</span>
<span class="t" style="left:561.20px;top:1272px;font-size:16.30px;line-height:18px;transform:scaleX(1.0600);">Customer</span>
<span class="t" style="left:888.40px;top:1272px;font-size:16.30px;line-height:18px;transform:scaleX(0.8843);font-weight:700;color:#0091ae;">2</span>
<span class="t" style="left:1188.90px;top:1272px;font-size:16.30px;line-height:18px;transform:scaleX(1.0209);">3.7 days</span>
<span class="t" style="left:1454.50px;top:1272px;font-size:16.30px;line-height:18px;transform:scaleX(0.9628);">28.57%</span>
</main>
<section>
<div class="b" style="left:1584.00px;top:150.00px;width:445.00px;height:1224.50px;background:#fff;border-left:1px solid #dfe3eb;box-sizing:border-box"></div>
<div class="b" style="left:1585.00px;top:208.00px;width:444.00px;height:1.10px;background:#dfe3eb;"></div>
<svg class="b" style="left:1610px;top:172px" width="22" height="21" viewBox="0 0 22 21"><path d="M1.6 1.6 L9.6 10.4 L1.8 19.4 M10.4 1.6 L18.6 10.4 L10.6 19.4" fill="none" stroke="#00a4bd" stroke-width="2.1" stroke-linecap="round" stroke-linejoin="round"/></svg>
<div class="b" style="left:1727.00px;top:310.00px;width:278.00px;height:1.00px;background:#c3cfdc;"></div>
<div class="b" style="left:1608.50px;top:252.00px;width:119.10px;height:59.00px;background:#fff;border:1.2px solid #cbd6e2;border-bottom:none;border-radius:3.5px 3.5px 0 0;box-sizing:border-box"></div>
<span class="t" style="left:1643.10px;top:273px;font-size:16.80px;line-height:19px;transform:scaleX(0.9921);font-weight:700;">Filters</span>
<span class="t" style="left:1627.60px;top:345px;font-size:16.30px;line-height:18px;letter-spacing:0.159px;transform:scaleX(1.0700);font-weight:700;">Date range</span>
<div class="b" style="left:1627.50px;top:372.50px;width:355.50px;height:47.30px;background:#f5f8fa;border:1.2px solid #cbd6e2;border-radius:3.5px;box-sizing:border-box"></div>
<span class="t" style="left:1640.60px;top:387px;font-size:18.50px;line-height:21px;letter-spacing:0.145px;transform:scaleX(1.0700);">Last year</span>
<svg class="b" style="left:1948.60px;top:392.50px" width="13.80" height="7.60" viewBox="0 0 13.80 7.60"><path d="M0.6 0.3 H13.20 Q13.80 0.3 13.50 1 L7.40 7.30 Q6.90 7.80 6.40 7.30 L0.3 1 Q0 0.3 0.6 0.3 Z" fill="#00a4bd"/></svg>
<span class="t" style="left:1627.60px;top:459px;font-size:16.30px;line-height:18px;letter-spacing:0.010px;transform:scaleX(1.0700);font-weight:700;">Select reps / teams</span>
<div class="b" style="left:1627.50px;top:486.50px;width:355.50px;height:47.30px;background:#f5f8fa;border:1.2px solid #cbd6e2;border-radius:3.5px;box-sizing:border-box"></div>
<span class="t" style="left:1640.60px;top:501px;font-size:18.50px;line-height:21px;transform:scaleX(1.0389);">All reps</span>
<svg class="b" style="left:1948.60px;top:506.50px" width="13.80" height="7.60" viewBox="0 0 13.80 7.60"><path d="M0.6 0.3 H13.20 Q13.80 0.3 13.50 1 L7.40 7.30 Q6.90 7.80 6.40 7.30 L0.3 1 Q0 0.3 0.6 0.3 Z" fill="#00a4bd"/></svg>
<span class="t" style="left:1627.60px;top:563px;font-size:16.30px;line-height:18px;transform:scaleX(1.0350);font-weight:700;">Pipeline</span>
<div class="b" style="left:1627.50px;top:591.00px;width:355.50px;height:47.30px;background:#f5f8fa;border:1.2px solid #cbd6e2;border-radius:3.5px;box-sizing:border-box"></div>
<span class="t" style="left:1640.60px;top:605px;font-size:18.50px;line-height:21px;transform:scaleX(1.0640);">Muestras</span>
<svg class="b" style="left:1948.60px;top:611.00px" width="13.80" height="7.60" viewBox="0 0 13.80 7.60"><path d="M0.6 0.3 H13.20 Q13.80 0.3 13.50 1 L7.40 7.30 Q6.90 7.80 6.40 7.30 L0.3 1 Q0 0.3 0.6 0.3 Z" fill="#00a4bd"/></svg>
<span class="t" style="left:1627.60px;top:667px;font-size:16.30px;line-height:18px;transform:scaleX(1.0456);font-weight:700;">Stages</span>
<div class="b" style="left:1627.50px;top:695.20px;width:355.50px;height:47.30px;background:#f5f8fa;border:1.2px solid #cbd6e2;border-radius:3.5px;box-sizing:border-box"></div>
<span class="t" style="left:1640.60px;top:710px;font-size:18.50px;line-height:21px;letter-spacing:0.330px;transform:scaleX(1.0700);">Stages (4/10)</span>
<svg class="b" style="left:1948.60px;top:715.20px" width="13.80" height="7.60" viewBox="0 0 13.80 7.60"><path d="M0.6 0.3 H13.20 Q13.80 0.3 13.50 1 L7.40 7.30 Q6.90 7.80 6.40 7.30 L0.3 1 Q0 0.3 0.6 0.3 Z" fill="#00a4bd"/></svg>
</section>
</div>
</body>
</html>
